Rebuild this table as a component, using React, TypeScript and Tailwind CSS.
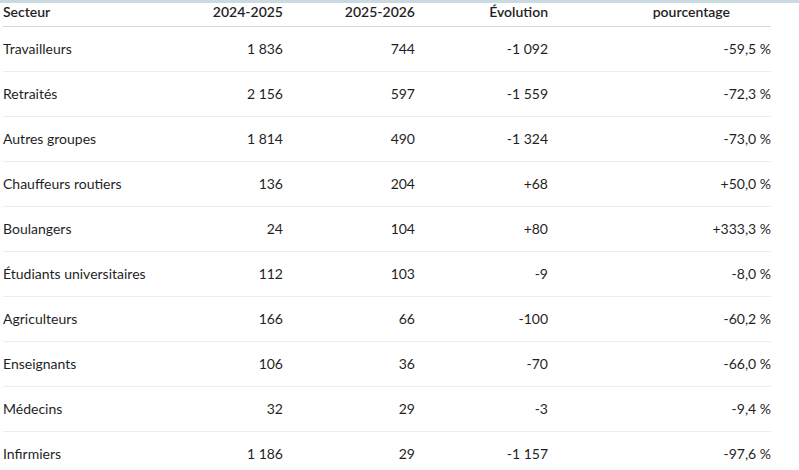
const rows = [
  ["Travailleurs", "1 836", "744", "-1 092", "-59,5 %"],
  ["Retraités", "2 156", "597", "-1 559", "-72,3 %"],
  ["Autres groupes", "1 814", "490", "-1 324", "-73,0 %"],
  ["Chauffeurs routiers", "136", "204", "+68", "+50,0 %"],
  ["Boulangers", "24", "104", "+80", "+333,3 %"],
  ["Étudiants universitaires", "112", "103", "-9", "-8,0 %"],
  ["Agriculteurs", "166", "66", "-100", "-60,2 %"],
  ["Enseignants", "106", "36", "-70", "-66,0 %"],
  ["Médecins", "32", "29", "-3", "-9,4 %"],
  ["Infirmiers", "1 186", "29", "-1 157", "-97,6 %"],
];

export default function App() {
  return (
    <div className="w-[799px] h-[470px] overflow-hidden bg-white font-['Lato','Liberation_Sans',sans-serif] text-[14px] text-[#1f1f1f]">
      <div className="h-[3px] bg-[#c9dbe1]" />
      <div className="pl-[3px]">
        <table className="table-fixed border-collapse w-[768px]">
          <colgroup>
            <col className="w-[180px]" />
            <col className="w-[100px]" />
            <col className="w-[132px]" />
            <col className="w-[133px]" />
            <col className="w-[223px]" />
          </colgroup>
          <thead>
            <tr className="h-[23px] border-b border-[#d6d6d6] leading-[17px]">
              <th className="text-left font-semibold p-0 pb-[6px]">Secteur</th>
              <th className="text-right font-semibold p-0 pb-[6px]">2024-2025</th>
              <th className="text-right font-semibold p-0 pb-[6px]">2025-2026</th>
              <th className="text-right font-semibold p-0 pb-[6px]">Évolution</th>
              <th className="text-right font-semibold p-0 pb-[6px] pr-[41px]">pourcentage</th>
            </tr>
          </thead>
          <tbody>
            {rows.map((r) => (
              <tr key={r[0]} className="h-[45px] border-b border-[#ededed]">
                <td className="text-left p-0 pb-[2px]">{r[0]}</td>
                <td className="text-right p-0 pb-[2px]">{r[1]}</td>
                <td className="text-right p-0 pb-[2px]">{r[2]}</td>
                <td className="text-right p-0 pb-[2px]">{r[3]}</td>
                <td className="text-right p-0 pb-[2px]">{r[4]}</td>
              </tr>
            ))}
          </tbody>
        </table>
      </div>
    </div>
  );
}
